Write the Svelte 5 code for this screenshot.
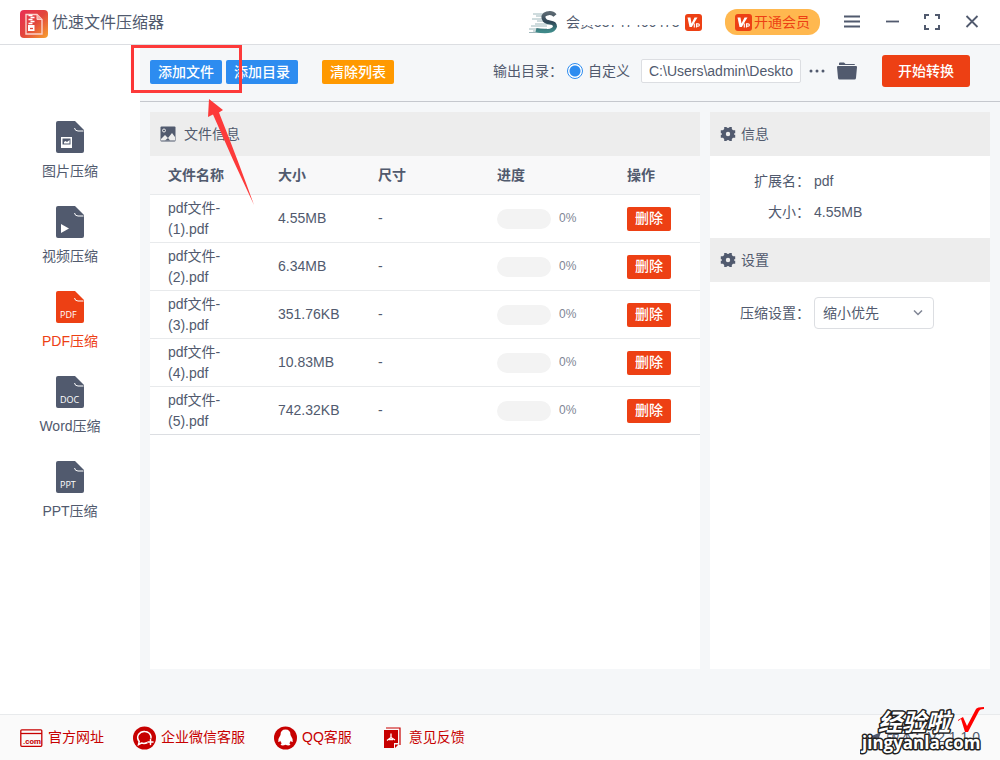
<script>
	const menu = [
		{ label: '图片压缩', type: 'image' },
		{ label: '视频压缩', type: 'video' },
		{ label: 'PDF压缩', type: 'PDF' },
		{ label: 'Word压缩', type: 'DOC' },
		{ label: 'PPT压缩', type: 'PPT' }
	];

	let active = $state('PDF');
	let output = $state('custom');
	let outputDir = $state('C:\\Users\\admin\\Desktop');
	let mode = $state('small');

	let files = $state([
		{ name: 'pdf文件-(1).pdf', size: '4.55MB', progress: 0 },
		{ name: 'pdf文件-(2).pdf', size: '6.34MB', progress: 0 },
		{ name: 'pdf文件-(3).pdf', size: '351.76KB', progress: 0 },
		{ name: 'pdf文件-(4).pdf', size: '10.83MB', progress: 0 },
		{ name: 'pdf文件-(5).pdf', size: '742.32KB', progress: 0 }
	]);

	function remove(file) {
		files = files.filter((f) => f.name !== file.name);
	}
</script>

{#snippet vip()}
	<svg class="vip" width="17" height="17" viewBox="0 0 17 17" aria-hidden="true">
		<rect width="17" height="17" rx="3" fill="#ed4014" />
		<path d="M2.5 3.5h3l1 6 3-6h3L6.8 13H4.5z" fill="#fff" />
		<path d="M9.3 9.5v4M11.5 13.5v-3.6h1.6q1.3 0 1.3 1.1t-1.3 1.1h-1.4" fill="none" stroke="#fff" stroke-width="1.1" />
	</svg>
{/snippet}

{#snippet gear()}
	<svg width="16" height="16" viewBox="0 0 16 16" aria-hidden="true">
		<circle cx="8" cy="8" r="4.2" fill="none" stroke="currentColor" stroke-width="4" />
		<path
			d="M4.2 1h2.6v3H4.2zM9.2 1h2.6v3H9.2zM4.2 12h2.6v3H4.2zM9.2 12h2.6v3H9.2zM0.8 4.2h3v3h-3zM12.2 4.2h3v3h-3zM0.8 8.8h3v3h-3zM12.2 8.8h3v3h-3z"
			fill="currentColor"
		/>
	</svg>
{/snippet}

<div class="window">
	<header class="titlebar">
		<svg width="28" height="28" viewBox="0 0 28 28" aria-hidden="true">
			<defs>
				<linearGradient id="logo" x1="0" y1="0" x2="1" y2="1">
					<stop offset="0" stop-color="#e92e55" />
					<stop offset="0.5" stop-color="#e2453c" />
					<stop offset="1" stop-color="#f8a330" />
				</linearGradient>
			</defs>
			<rect width="28" height="28" rx="4" fill="url(#logo)" />
			<path d="M6 4.5h11l5 5V24H6z" fill="none" stroke="#fbd0ca" stroke-width="1.4" />
			<path d="M17 4.5v5h5" fill="#f6aaa4" stroke="#fbd0ca" />
			<path d="M8.500 5.500h4M10.500 7.500h4M8.500 9.500h4M10.500 11.500h4M8.500 13.500h4" stroke="#fff" stroke-width="1.3" />
			<path d="M8 15h6.500v6H8z" fill="#fff" />
			<path d="M10 18.500h3" stroke="#e2453c" stroke-width="1.300" />
		</svg>
		<h1>优速文件压缩器</h1>

		<div class="account">
			<svg width="30" height="24" viewBox="0 0 30 24" aria-hidden="true">
				<defs>
					<linearGradient id="avatar" x1="0" y1="0" x2="0" y2="1">
						<stop offset="0" stop-color="#5b6871" />
						<stop offset="0.5" stop-color="#2f4656" />
						<stop offset="1" stop-color="#3f8989" />
					</linearGradient>
				</defs>
				<path d="M5 4h12M8 6h9M4 9h12M9 11h10M7 14h16M3 16h16M1 19h18M5 21h15M1 22.5h12" stroke="#9fb8bc" stroke-width="1" />
				<path d="M27 5.500Q24 2 19 3.500T16 9q1 3 6 3.500t5 4q-1 4-7 4.500T8 20" fill="none" stroke="url(#avatar)" stroke-width="4" />
			</svg>
			<span>会<span class="hidden-id">员53747466473</span></span>
			{@render vip()}
		</div>
		<button class="join">{@render vip()}开通会员</button>

		<nav class="controls" aria-label="窗口">
			<button aria-label="菜单">
				<svg width="16" height="16" viewBox="0 0 16 16"><path d="M0 2.500h16M0 7.500h16M0 12.500h16" stroke-width="1.800" /></svg>
			</button>
			<button aria-label="最小化">
				<svg width="16" height="16" viewBox="0 0 16 16"><path d="M2 7.500h13" stroke-width="1.800" /></svg>
			</button>
			<button aria-label="最大化">
				<svg width="16" height="16" viewBox="0 0 16 16">
					<path d="M1 5V1h4M11 1h4v4M15 11v4h-4M5 15H1v-4" stroke-width="2" />
				</svg>
			</button>
			<button aria-label="关闭">
				<svg width="16" height="16" viewBox="0 0 16 16"><path d="M2.500 2l11 11M13.500 2l-11 11" stroke-width="1.800" /></svg>
			</button>
		</nav>
	</header>

	<div class="body">
		<nav class="sidebar">
			{#each menu as item}
				<button class:active={active === item.type} onclick={() => (active = item.type)}>
					<svg width="28" height="32" viewBox="0 0 28 32" aria-hidden="true">
						<path d="M2 0h17l9 9v21q0 2-2 2H2q-2 0-2-2V2q0-2 2-2z" fill="currentColor" />
						<path d="M18.500 7q.5 3 3.500 3h5.500" fill="none" stroke="#fff" stroke-width="1" />
						{#if item.type === 'image'}
							<rect x="5" y="16" width="11" height="11" fill="#fff" />
							<path d="M6.500 17.500h8v6h-8z" fill="currentColor" />
							<path d="M8 22.500v-1.500l1.500-1 1.500 1 2.500-2v3.500z" fill="#fff" />
						{:else if item.type === 'video'}
							<path d="M5 18v9l8-4.500z" fill="#fff" />
						{:else}
							<text x="4" y="27">{item.type}</text>
						{/if}
					</svg>
					{item.label}
				</button>
			{/each}
		</nav>

		<main>
			<div class="toolbar">
				<button class="btn primary">添加文件</button>
				<button class="btn primary">添加目录</button>
				<button class="btn warning" onclick={() => (files = [])}>清除列表</button>

				<div class="output">
					<span>输出目录：</span>
					<label class="radio">
						<input type="radio" name="output" value="custom" bind:group={output} />
						自定义
					</label>
					<input class="path" type="text" aria-label="输出目录" bind:value={outputDir} />
					<button class="plain" aria-label="更多">
						<svg width="16" height="16" viewBox="0 0 16 16" fill="currentColor">
							<circle cx="2" cy="8" r="1.500" /><circle cx="8" cy="8" r="1.500" /><circle cx="14" cy="8" r="1.500" />
						</svg>
					</button>
					<button class="plain folder" aria-label="打开目录">
						<svg width="20" height="18" viewBox="0 0 20 18" fill="currentColor">
							<path d="M2 3V1.500Q2 .5 3 .5h4l1.500 1.500H17q1 0 1 1z" />
							<path d="M1 4h18q1 0 1 1L19 16q-.2 1.500-1.500 1.500h-15Q1.200 17.500 1 16L0 5q0-1 1-1z" />
						</svg>
					</button>
				</div>
				<button class="start">开始转换</button>
			</div>

			<div class="panels">
				<section class="panel files">
					<h2>
						<svg width="16" height="16" viewBox="0 0 16 16" aria-hidden="true">
							<rect x="0.500" y="0.500" width="15" height="15" rx="1" fill="currentColor" />
							<circle cx="4" cy="4.500" r="1.500" fill="none" stroke="#ededed" />
							<path d="M1 13l4-4 3 3 4-5 3 4v3.500H1z" fill="#ededed" />
							<path d="M5 14.500l3-2.500 2 2.500z" fill="currentColor" />
						</svg>
						文件信息
					</h2>
					<table>
						<thead>
							<tr>
								<th class="name">文件名称</th>
								<th class="size">大小</th>
								<th class="dim">尺寸</th>
								<th class="prog">进度</th>
								<th>操作</th>
							</tr>
						</thead>
						<tbody>
							{#each files as file (file.name)}
								<tr>
									<td>{file.name}</td>
									<td>{file.size}</td>
									<td>-</td>
									<td>
										<div class="progress">
											<div class="track"><div class="bar" style="width: {file.progress}%"></div></div>
											<span>{file.progress}%</span>
										</div>
									</td>
									<td><button class="btn error" onclick={() => remove(file)}>删除</button></td>
								</tr>
							{/each}
						</tbody>
					</table>
				</section>

				<aside class="panel">
					<h2>{@render gear()}信息</h2>
					<dl>
						<dt>扩展名：</dt>
						<dd>pdf</dd>
						<dt>大小：</dt>
						<dd>4.55MB</dd>
					</dl>
					<h2>{@render gear()}设置</h2>
					<div class="setting">
						<label for="mode">压缩设置：</label>
						<div class="select">
							<select id="mode" bind:value={mode}>
								<option value="small">缩小优先</option>
								<option value="clear">清晰优先</option>
							</select>
							<svg width="10" height="6" viewBox="0 0 10 6" aria-hidden="true"><path d="M1 .5l4 4 4-4" /></svg>
						</div>
					</div>
				</aside>
			</div>
		</main>
	</div>

	<footer>
		<a href="#site">
			<svg width="23" height="24" viewBox="0 0 23 24" aria-hidden="true">
				<rect x="0.800" y="3.800" width="21" height="16.500" rx="1" fill="none" stroke="currentColor" stroke-width="1.300" />
				<path d="M1 7.500h21" stroke="currentColor" stroke-width="1.300" />
				<text class="com" x="3" y="17.500">.com</text>
			</svg>
			官方网址
		</a>
		<a href="#wechat">
			<svg width="23" height="24" viewBox="0 0 23 24" aria-hidden="true">
				<circle cx="11.500" cy="12" r="11.500" fill="currentColor" />
				<path d="M14.500 16.500q-3 1.500-6 .5L5.500 18.500l.7-3Q3.500 12 5.500 8.500 8 5 12 5.500q5 .5 6 5 .1 1-.2 2" fill="none" stroke="#fff" stroke-width="1.500" />
				<path d="M17.500 13.500v5M15 16h5" fill="none" stroke="#fff" stroke-width="1.500" stroke-linecap="round" />
			</svg>
			企业微信客服
		</a>
		<a href="#qq">
			<svg width="23" height="24" viewBox="0 0 23 24" aria-hidden="true">
				<circle cx="11.500" cy="12" r="11.500" fill="currentColor" />
				<path
					d="M11.500 3.500q-5 0-5 5.500-2.500 3.500-2.200 7 .9.300 2-1.300.4 1.600 1.500 2.500-1.500.8-1 1.800 2 .9 4.700-.2 2.700 1.100 4.700.2.500-1-1-1.800 1.100-.9 1.500-2.500 1.100 1.600 2 1.300.3-3.500-2.200-7 0-5.500-5-5.500z"
					fill="#fff"
				/>
			</svg>
			QQ客服
		</a>
		<a href="#feedback">
			<svg width="23" height="24" viewBox="0 0 23 24" aria-hidden="true">
				<path d="M5 2h14v17" fill="none" stroke="currentColor" stroke-width="1.200" />
				<path d="M3 4h14v13h-4v5H3z" fill="currentColor" />
				<path d="M14 18.500h3.500L14 22z" fill="currentColor" />
				<path d="M10 7.500v4l-4 3M10 11.500l4 2.500M8 13.500h4" fill="none" stroke="#fff" stroke-width="1.300" />
			</svg>
			意见反馈
		</a>
		<span class="version">
			<svg width="16" height="16" viewBox="0 0 16 16" aria-hidden="true"><path d="M1 8l14-6-4 12-4-4z" fill="currentColor" /></svg>
			版本：V2.1.1.0
		</span>
	</footer>

	<div class="highlight"></div>
	<svg class="arrow" width="48" height="108" viewBox="0 0 48 108" aria-hidden="true">
		<path d="M2 0l14 11-4 2.500Q32 64 47 106 26 62 6 15.500L1 18z" fill="#fd3a3a" />
	</svg>

	<svg class="watermark" width="132" height="56" viewBox="0 0 132 56">
		<text class="cn" x="18" y="27">经验啦</text>
		<text class="en" x="2" y="45">jingyanla.com</text>
		<path d="M98 16l5-3 4 9 9-17q1-2 8-2v2q-4 0-5 2l-11 21h-3l-4-13-3 2z" fill="#f00" />
	</svg>
</div>

<style>
	:global(body) {
		margin: 0;
	}
	.window {
		position: relative;
		display: flex;
		flex-direction: column;
		min-height: 100vh;
		overflow: hidden;
		font: 14px/21px 'Liberation Sans', 'Noto Sans CJK SC', sans-serif;
		color: #515a6e;
		background: #fff;
	}
	button, input, select {
		box-sizing: border-box;
		margin: 0;
		font: inherit;
		color: inherit;
	}
	button {
		padding: 0;
		border: none;
		background: none;
		cursor: pointer;
	}
	svg {
		flex: none;
	}

	/* title bar */
	.titlebar {
		display: flex;
		align-items: center;
		height: 44px;
		padding: 0 20px;
		border-bottom: 1px solid #dcdee2;
	}
	.titlebar > svg {
		margin-top: 4px;
	}
	h1 {
		margin: 0 auto 0 4px;
		font-size: 16px;
		font-weight: normal;
	}
	.account {
		display: flex;
		align-items: center;
		gap: 8px;
	}
	.account .vip {
		margin-left: -4px;
	}
	.hidden-id {
		position: relative;
		display: inline-block;
		width: 101px;
	}
	/* hides all but the foot of the account number */
	.hidden-id::after {
		content: '';
		position: absolute;
		inset: 0 0 8px 0;
		background: #fff;
	}
	.join {
		display: flex;
		align-items: center;
		gap: 2px;
		height: 26px;
		margin-left: 23px;
		padding: 0 10px;
		border-radius: 12px;
		background: #ffb84f;
		color: #ed4014;
	}
	.controls {
		display: flex;
		gap: 24px;
		margin-left: 24px;
	}
	.controls button {
		display: flex;
	}
	.controls svg {
		fill: none;
		stroke: currentColor;
	}

	.body {
		display: flex;
		flex: 1;
	}

	/* sidebar */
	.sidebar {
		display: flex;
		flex-direction: column;
		flex: none;
		width: 140px;
		padding-top: 76px;
	}
	.sidebar button {
		display: flex;
		flex-direction: column;
		align-items: center;
		gap: 8px;
		height: 85px;
	}
	.sidebar .active {
		color: #ed4014;
	}
	.sidebar text {
		font: 9px 'Open Sans', sans-serif;
		fill: #fff;
	}

	/* main area */
	main {
		display: flex;
		flex-direction: column;
		flex: 1;
		min-width: 0;
		background: #f5f7f9;
	}
	.toolbar {
		display: flex;
		align-items: center;
		gap: 4px;
		box-sizing: border-box;
		height: 57px;
		padding: 0 30px 4px 10px;
		border-bottom: 1px solid #c5c8ce;
		white-space: nowrap;
	}
	.toolbar .btn {
		margin-top: 2px;
	}
	.btn {
		height: 24px;
		padding: 0 8px;
		border-radius: 2px;
		color: #fff;
		font-weight: 500;
	}
	.primary {
		background: #2d8cf0;
	}
	.toolbar .warning {
		margin-left: 20px;
		background: #f90;
	}
	.error {
		display: block;
		background: #ed4014;
	}
	.output {
		display: flex;
		align-items: center;
		margin-left: auto;
	}
	.radio {
		display: flex;
		align-items: center;
		gap: 5px;
		margin: 0 11px 0 4px;
	}
	.radio input {
		appearance: none;
		width: 16px;
		height: 16px;
		border: 1px solid #2d8cf0;
		border-radius: 50%;
		background: #fff;
	}
	.radio input:checked {
		background: radial-gradient(circle, #2d8cf0 5px, #fff 6px);
	}
	.path {
		width: 160px;
		height: 24px;
		padding: 0 7px;
		border: 1px solid #dcdee2;
		border-radius: 2px;
		background: #fff;
	}
	.plain {
		display: flex;
		margin-left: 8px;
	}
	.folder {
		margin-left: 12px;
	}
	.start {
		width: 88px;
		height: 32px;
		margin-left: 21px;
		border-radius: 3px;
		background: #ed4014;
		color: #fff;
		font-weight: 500;
	}

	.panels {
		display: flex;
		flex: 1;
		gap: 10px;
		padding: 10px 10px 45px;
	}
	.panel {
		flex: none;
		width: 280px;
		background: #fff;
	}
	.files {
		flex: 1;
		width: auto;
	}
	h2 {
		display: flex;
		align-items: center;
		gap: 5px;
		height: 44px;
		margin: 0;
		padding: 0 10px;
		background: #ededed;
		font-size: 14px;
		font-weight: normal;
	}
	.files h2 {
		gap: 8px;
	}

	table {
		width: 100%;
		table-layout: fixed;
		border-collapse: separate;
		border-spacing: 0;
		border-bottom: 1px solid #dcdee2;
	}
	th, td {
		box-sizing: border-box;
		padding: 0 18px;
		border-bottom: 1px solid #e8eaec;
		text-align: left;
	}
	th {
		height: 39px;
		background: #f8f8f9;
		font-weight: bold;
	}
	td {
		height: 48px;
		line-height: 21px;
	}
	tbody tr:last-child td {
		height: 47px;
		border-bottom: none;
	}
	.name {
		width: 110px;
	}
	.size {
		width: 100px;
	}
	.dim {
		width: 119px;
	}
	.prog {
		width: 130px;
	}
	.progress {
		display: flex;
		align-items: center;
		gap: 8px;
		font-size: 12px;
		color: #808695;
	}
	.track {
		width: 54px;
		height: 20px;
		border-radius: 10px;
		background: #f3f3f3;
		overflow: hidden;
	}
	.bar {
		height: 100%;
		background: #2d8cf0;
	}

	dl {
		display: grid;
		grid-template-columns: 100px 1fr;
		column-gap: 4px;
		margin: 0;
		padding: 10px 0;
		line-height: 31px;
	}
	dt {
		text-align: right;
	}
	dd {
		margin: 0;
	}
	.setting {
		display: grid;
		grid-template-columns: 100px 120px;
		align-items: center;
		gap: 4px;
		padding: 15px 0;
	}
	.setting label {
		text-align: right;
	}
	.select {
		position: relative;
	}
	select {
		appearance: none;
		width: 100%;
		height: 32px;
		padding: 0 24px 0 8px;
		border: 1px solid #dcdee2;
		border-radius: 4px;
		background: #fff;
	}
	.select svg {
		position: absolute;
		right: 11px;
		top: 13px;
		fill: none;
		stroke: #808695;
		stroke-width: 1.5;
		pointer-events: none;
	}

	footer {
		display: flex;
		align-items: center;
		gap: 29px;
		height: 45px;
		padding: 0 20px;
		border-top: 1px solid #e8eaec;
		background: #fafafa;
	}
	footer a {
		display: flex;
		align-items: center;
		gap: 5px;
		color: #c70000;
		text-decoration: none;
	}
	.com {
		font: bold 8px Roboto, sans-serif;
		fill: currentColor;
	}
	.version {
		display: flex;
		align-items: center;
		gap: 4px;
		margin-left: auto;
	}

	/* tutorial marks over the window */
	.highlight {
		position: absolute;
		left: 131px;
		top: 45px;
		box-sizing: border-box;
		width: 111px;
		height: 48px;
		border: 3px solid #fd3a3a;
		pointer-events: none;
	}
	.arrow {
		position: absolute;
		left: 207px;
		top: 99px;
		pointer-events: none;
	}
	.watermark {
		position: absolute;
		right: 8px;
		bottom: 0;
		pointer-events: none;
	}
	.watermark text {
		fill: #fff;
		stroke: #222;
		stroke-width: 3px;
		stroke-linejoin: round;
		paint-order: stroke;
		font-weight: bold;
	}
	.cn {
		font-size: 24px;
		font-family: 'Noto Sans CJK SC', sans-serif;
		font-style: italic;
	}
	.en {
		font-size: 17px;
		font-family: 'Open Sans', sans-serif;
	}
</style>
